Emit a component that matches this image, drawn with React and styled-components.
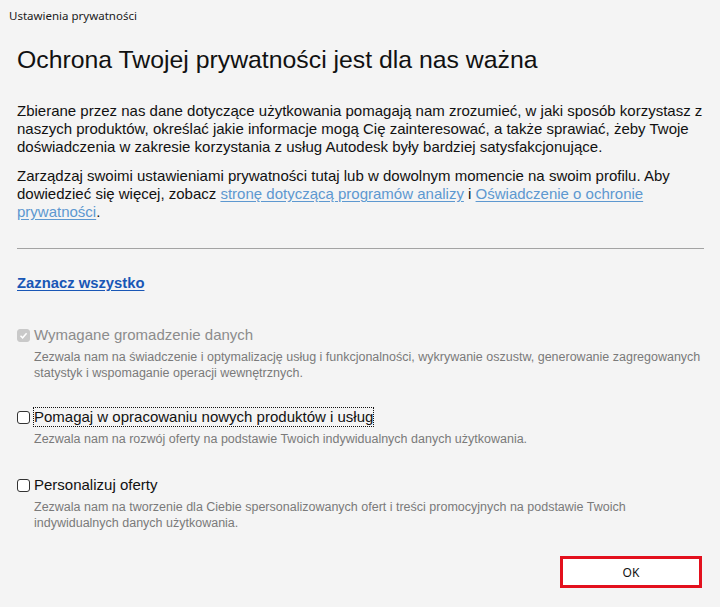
import React from 'react';
import styled, {createGlobalStyle} from 'styled-components';

const GlobalStyle = createGlobalStyle`
  html, body {
    margin: 0;
    padding: 0;
    background: #f4f4f4;
  }
  body {
    font-family: "Liberation Sans", Arial, sans-serif;
    color: #111;
  }
`;

const Window = styled.div`
  width: 720px;
  height: 607px;
  display: flex;
  flex-direction: column;
  background: #f4f4f4;
  overflow: hidden;
`;

const TitleBar = styled.div`
  height: 30px;
  display: flex;
  align-items: center;
  padding-left: 9px;
  font-family: "Noto Sans", "Open Sans", sans-serif;
  font-size: 11.5px;
  color: #1a1a1a;
`;

const Content = styled.div`
  flex: 1;
  display: flex;
  flex-direction: column;
  padding: 14px 14px 0 17px;
`;

const Heading = styled.h1`
  margin: 0;
  font-size: 24.8px;
  font-weight: normal;
  line-height: 32px;
  color: #111;
`;

const Paragraph = styled.p`
  margin: ${p => p.$top || 0}px 0 0;
  font-size: 15px;
  line-height: 18px;
  color: #111;
`;

const TextLink = styled.a`
  color: #5d98d0;
  text-decoration: underline;
  text-underline-offset: 2px;
`;

const Divider = styled.hr`
  margin: 27px 2px 0 0;
  border: 0;
  border-top: 1px solid #a3a3a3;
`;

const SelectAll = styled.a`
  margin-top: 24px;
  align-self: flex-start;
  font-size: 14.8px;
  font-weight: bold;
  line-height: 20px;
  color: #1957b6;
  text-decoration: underline;
  text-underline-offset: 2px;
`;

const Options = styled.div`
  display: flex;
  flex-direction: column;
  margin-top: 32px;
`;

const Option = styled.div`
  display: flex;
  flex-direction: column;
  margin-bottom: ${p => p.$gap}px;
`;

const OptionRow = styled.label`
  display: flex;
  align-items: center;
  gap: 4px;
  height: 20px;
`;

const Box = styled.span`
  width: 13px;
  height: 13px;
  box-sizing: border-box;
  border-radius: 3px;
  border: 1px solid ${p => (p.$disabled ? '#c9c9c9' : '#333')};
  background: ${p => (p.$disabled ? '#c9c9c9' : '#fff')};
  display: flex;
  align-items: center;
  justify-content: center;
`;

const OptionLabel = styled.span`
  font-size: 15px;
  line-height: 18px;
  color: ${p => (p.$disabled ? '#8c8c8c' : '#111')};
  outline: ${p => (p.$focused ? '1px dotted #111' : 'none')};
`;

const Description = styled.div`
  margin: 4px 0 0 17px;
  font-size: 12.5px;
  line-height: 16px;
  color: #7a7a7a;
`;

const Footer = styled.div`
  margin-top: auto;
  display: flex;
  justify-content: flex-end;
  padding: 0 4px 19px 0;
`;

const OkButton = styled.button`
  width: 142px;
  height: 32px;
  box-sizing: border-box;
  border: 3px solid #e3101d;
  background: #fff;
  font-family: "Noto Sans", "Open Sans", sans-serif;
  font-size: 12px;
  color: #111;
  padding: 0;
`;

const CheckMark = () => (
  <svg width="9" height="9" viewBox="0 0 9 9">
    <path d="M1.5 4.8 L3.6 6.8 L7.6 2.2" fill="none" stroke="#fff" strokeWidth="1.5" />
  </svg>
);

const options = [
  {
    label: 'Wymagane gromadzenie danych',
    disabled: true,
    desc: 'Zezwala nam na świadczenie i optymalizację usług i funkcjonalności, wykrywanie oszustw, generowanie zagregowanych statystyk i wspomaganie operacji wewnętrznych.',
    gap: 26,
  },
  {
    label: 'Pomagaj w opracowaniu nowych produktów i usług',
    focused: true,
    desc: 'Zezwala nam na rozwój oferty na podstawie Twoich indywidualnych danych użytkowania.',
    gap: 28,
  },
  {
    label: 'Personalizuj oferty',
    desc: 'Zezwala nam na tworzenie dla Ciebie spersonalizowanych ofert i treści promocyjnych na podstawie Twoich indywidualnych danych użytkowania.',
    gap: 0,
  },
];

export default function App() {
  return (
    <Window>
      <GlobalStyle />
      <TitleBar>Ustawienia prywatności</TitleBar>
      <Content>
        <Heading>Ochrona Twojej prywatności jest dla nas ważna</Heading>
        <Paragraph $top={26}>
          Zbierane przez nas dane dotyczące użytkowania pomagają nam zrozumieć, w jaki sposób korzystasz z
          naszych produktów, określać jakie informacje mogą Cię zainteresować, a także sprawiać, żeby Twoje
          doświadczenia w zakresie korzystania z usług Autodesk były bardziej satysfakcjonujące.
        </Paragraph>
        <Paragraph $top={11}>
          Zarządzaj swoimi ustawieniami prywatności tutaj lub w dowolnym momencie na swoim profilu. Aby
          dowiedzieć się więcej, zobacz{' '}
          <TextLink href="#">stronę dotyczącą programów analizy</TextLink> i{' '}
          <TextLink href="#">Oświadczenie o ochronie prywatności</TextLink>.
        </Paragraph>
        <Divider />
        <SelectAll href="#">Zaznacz wszystko</SelectAll>
        <Options>
          {options.map((item, index) => (
            <Option key={index} $gap={item.gap}>
              <OptionRow>
                <Box $disabled={item.disabled}>{item.disabled && <CheckMark />}</Box>
                <OptionLabel $disabled={item.disabled} $focused={item.focused}>
                  {item.label}
                </OptionLabel>
              </OptionRow>
              <Description>{item.desc}</Description>
            </Option>
          ))}
        </Options>
        <Footer>
          <OkButton>OK</OkButton>
        </Footer>
      </Content>
    </Window>
  );
}
